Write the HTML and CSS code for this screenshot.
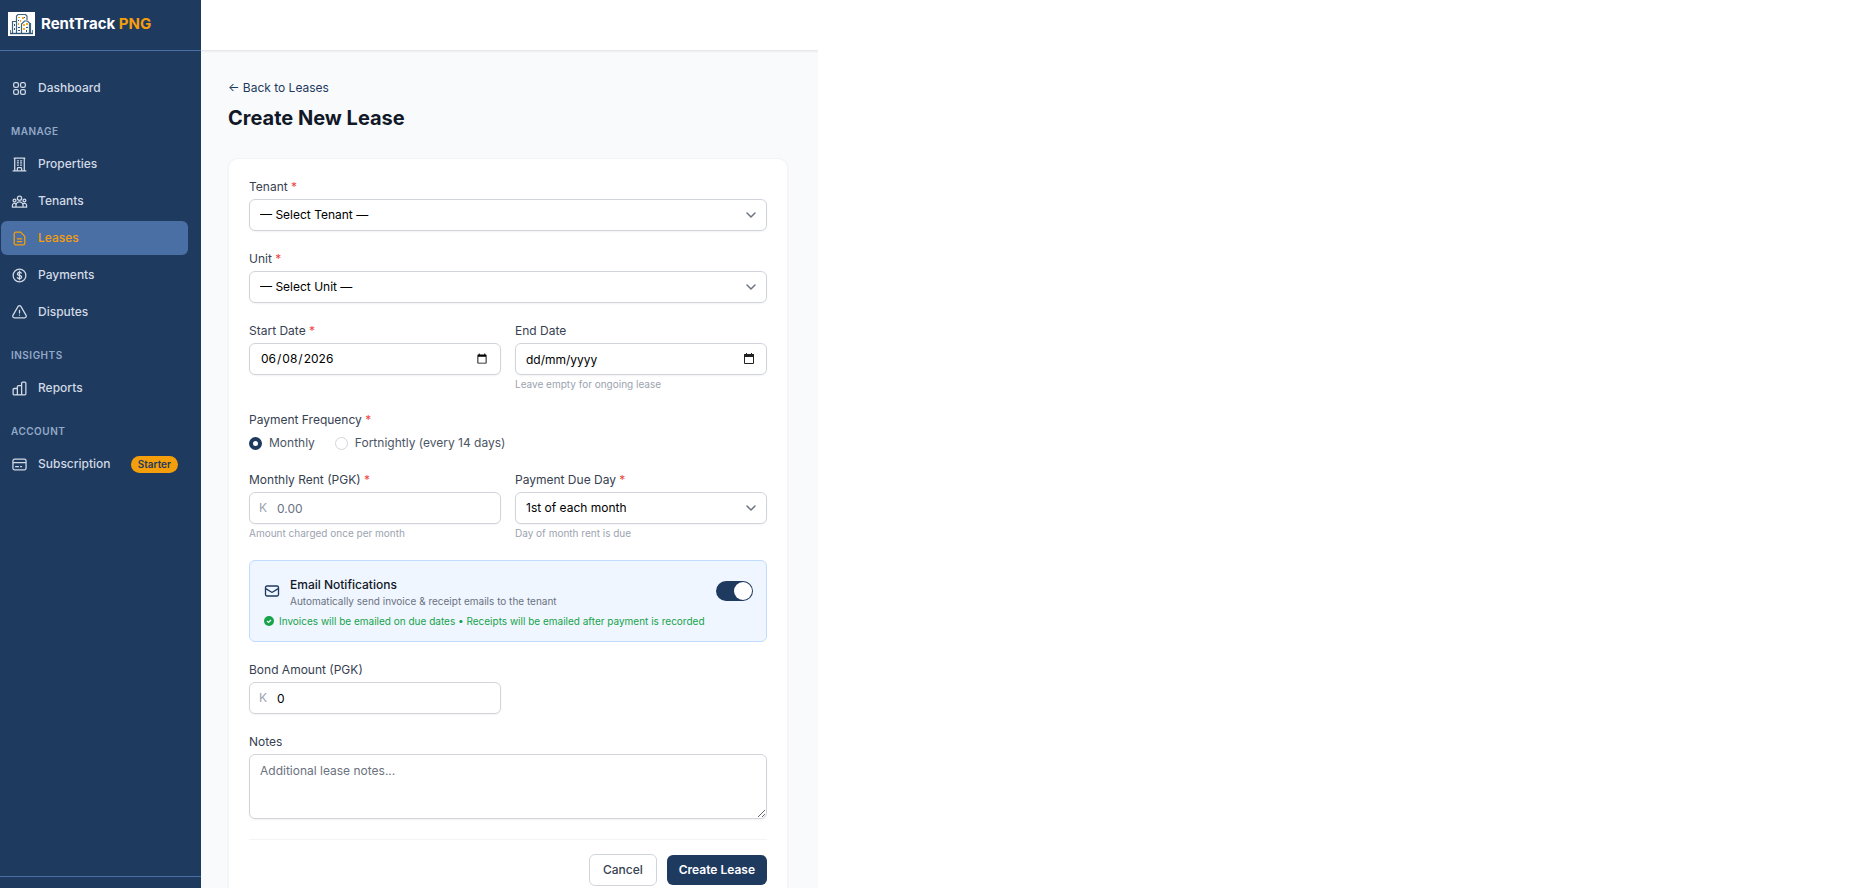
FILE: index.html
```html
<!DOCTYPE html>
<html lang="en">
<head>
<meta charset="utf-8">
<title>Create New Lease - RentTrack PNG</title>
<link rel="stylesheet" href="styles.css">
</head>
<body>
<div class="app">
  <aside class="sidebar">
    <a class="brand" href="#">
      <svg class="brand-logo" viewBox="0 0 27 24" aria-hidden="true">
        <rect width="27" height="24" fill="#fff"/>
        <path d="M4.500 21V9.500h4M8.500 21V4l1.500-1.500h7.500l1.500 1.500v4M13.500 21v-9l3-3h3l2 2V21M21.500 11.500h1V21" fill="none" stroke="#3f6482" stroke-width="1.2"/>
        <path d="M2 21.500h23" stroke="#2f5573" stroke-width="1.4"/>
        <path d="M2.500 21V18M24.500 21v-3" stroke="#5b7d98"/>
        <g fill="#f5a623"><rect x="10" y="5" width="2" height="1"/><rect x="14" y="5" width="2" height="2"/><rect x="12" y="8" width="1" height="2"/><rect x="10" y="11" width="1" height="2"/><rect x="15" y="12" width="2" height="2"/><rect x="18" y="11" width="2" height="2"/><rect x="15" y="16" width="2" height="2"/></g>
        <g fill="#2f5573"><rect x="10" y="8" width="1" height="1"/><rect x="16" y="5" width="1" height="1"/><rect x="6" y="12" width="1" height="2"/><rect x="6" y="16" width="1" height="2"/><rect x="10" y="15" width="2" height="1"/><rect x="10" y="18" width="2" height="1"/><rect x="18" y="15" width="2" height="1"/><rect x="18" y="18" width="1" height="2"/></g>
      </svg>
      <span class="brand-name">RentTrack <span class="brand-accent">PNG</span></span>
    </a>
    <nav class="nav">
      <a class="nav-item" href="#"><svg class="icon" viewBox="0 0 24 24"><path d="M3.750 6A2.250 2.250 0 0 1 6 3.750h2.250A2.250 2.250 0 0 1 10.500 6v2.250a2.250 2.250 0 0 1-2.250 2.250H6a2.250 2.250 0 0 1-2.250-2.250V6ZM3.750 15.750A2.250 2.250 0 0 1 6 13.500h2.250a2.250 2.250 0 0 1 2.250 2.250V18a2.250 2.250 0 0 1-2.250 2.250H6A2.250 2.250 0 0 1 3.750 18v-2.250ZM13.500 6a2.250 2.250 0 0 1 2.250-2.250H18A2.250 2.250 0 0 1 20.250 6v2.250A2.250 2.250 0 0 1 18 10.500h-2.250a2.250 2.250 0 0 1-2.250-2.250V6ZM13.500 15.750a2.250 2.250 0 0 1 2.250-2.250H18a2.250 2.250 0 0 1 2.250 2.250V18A2.250 2.250 0 0 1 18 20.250h-2.250A2.250 2.250 0 0 1 13.500 18v-2.250Z"/></svg>Dashboard</a>
      <h2 class="nav-heading">Manage</h2>
      <a class="nav-item" href="#"><svg class="icon" viewBox="0 0 24 24"><path d="M3 21h18M4.500 3h15M5.250 3v18m13.500-18v18M9 6.750h1.500m-1.500 3h1.500m-1.500 3h1.500m3-6H15m-1.500 3H15m-1.500 3H15M9 21v-3.375c0-.621.504-1.125 1.125-1.125h3.750c.621 0 1.125.504 1.125 1.125V21"/></svg>Properties</a>
      <a class="nav-item" href="#"><svg class="icon" viewBox="0 0 24 24"><path d="M15 7.500a3 3 0 1 1-6 0 3 3 0 0 1 6 0ZM7 10.500a2 2 0 1 1-4 0 2 2 0 0 1 4 0ZM21 10.500a2 2 0 1 1-4 0 2 2 0 0 1 4 0ZM7 20v-2.500a5 5 0 0 1 10 0V20ZM7 20H2v-2a3 3 0 0 1 5.500-2M17 20h5v-2a3 3 0 0 0-5.500-2"/></svg>Tenants</a>
      <a class="nav-item active" href="#" aria-current="page"><svg class="icon" viewBox="0 0 24 24"><path d="M19.500 9 13.500 3H6.750A2.250 2.250 0 0 0 4.500 5.250v13.500A2.250 2.250 0 0 0 6.750 21h10.500a2.250 2.250 0 0 0 2.250-2.250V9ZM9 12.500h6M9 16.500h6"/></svg>Leases</a>
      <a class="nav-item" href="#"><svg class="icon" viewBox="0 0 24 24"><path d="M12 6v12m-3-2.818.879.659c1.171.879 3.070.879 4.242 0 1.172-.879 1.172-2.303 0-3.182C13.536 12.219 12.768 12 12 12c-.725 0-1.450-.220-2.003-.659-1.106-.879-1.106-2.303 0-3.182s2.900-.879 4.006 0l.415.330M21 12a9 9 0 1 1-18 0 9 9 0 0 1 18 0Z"/></svg>Payments</a>
      <a class="nav-item" href="#"><svg class="icon" viewBox="0 0 24 24"><path d="M12 9v3.750m-9.303 3.376c-.866 1.500.217 3.374 1.948 3.374h14.710c1.730 0 2.813-1.874 1.948-3.374L13.949 3.378c-.866-1.500-3.032-1.500-3.898 0L2.697 16.126ZM12 15.750h.007v.008H12v-.008Z"/></svg>Disputes</a>
      <h2 class="nav-heading">Insights</h2>
      <a class="nav-item" href="#"><svg class="icon" viewBox="0 0 24 24"><path d="M9 21H4.500A1.500 1.500 0 0 1 3 19.500v-6A1.500 1.500 0 0 1 4.500 12H9M9 19.500v-10A1.500 1.500 0 0 1 10.500 8H15M15 19.500v-15A1.500 1.500 0 0 1 16.500 3h3A1.500 1.500 0 0 1 21 4.500v15a1.500 1.500 0 0 1-1.500 1.500h-3a1.500 1.500 0 0 1-1.500-1.500 1.500 1.500 0 0 1-1.500 1.500h-3A1.500 1.500 0 0 1 9 19.500 1.500 1.500 0 0 1 7.500 21"/></svg>Reports</a>
      <h2 class="nav-heading">Account</h2>
      <a class="nav-item" href="#"><svg class="icon" viewBox="0 0 24 24"><path d="M3 9.500h18M6.500 15h4m3 0h1.500M5 19.500h14a2.250 2.250 0 0 0 2.250-2.250V6.750A2.250 2.250 0 0 0 19 4.500H5a2.250 2.250 0 0 0-2.250 2.250v10.500A2.250 2.250 0 0 0 5 19.500Z"/></svg>Subscription<span class="plan">Starter</span></a>
    </nav>
    <div class="sidebar-footer"></div>
  </aside>
  <div class="page">
    <header class="topbar"></header>
    <main class="content">
      <a class="back" href="#">← Back to Leases</a>
      <h1 class="title">Create New Lease</h1>
      <form class="card">
        <div class="field">
          <label for="tenant">Tenant <span class="req">*</span></label>
          <div class="select-wrap">
            <select id="tenant" class="control"><option>— Select Tenant —</option></select>
            <svg class="chevron" viewBox="0 0 20 20"><path d="M6 8l4 4 4-4"/></svg>
          </div>
        </div>
        <div class="field">
          <label for="unit">Unit <span class="req">*</span></label>
          <div class="select-wrap">
            <select id="unit" class="control"><option>— Select Unit —</option></select>
            <svg class="chevron" viewBox="0 0 20 20"><path d="M6 8l4 4 4-4"/></svg>
          </div>
        </div>
        <div class="row">
          <div class="field">
            <label for="start">Start Date <span class="req">*</span></label>
            <input id="start" class="control" type="date" value="2026-06-08">
          </div>
          <div class="field">
            <label for="end">End Date</label>
            <div class="date-wrap">
              <input id="end" class="control date-text" type="text" placeholder="dd/mm/yyyy">
              <svg class="calendar" viewBox="0 0 12 12"><path d="M1.500 2.500h9v8h-9z" fill="none" stroke="currentColor"/><path d="M1 1h10v3H1zM3 0h1v2H3zM8 0h1v2H8z" fill="currentColor"/></svg>
            </div>
            <p class="hint">Leave empty for ongoing lease</p>
          </div>
        </div>
        <fieldset class="frequency">
          <legend>Payment Frequency <span class="req">*</span></legend>
          <div class="radios">
            <label class="radio"><input type="radio" name="frequency" checked>Monthly</label>
            <label class="radio"><input type="radio" name="frequency">Fortnightly (every 14 days)</label>
          </div>
        </fieldset>
        <div class="row">
          <div class="field">
            <label for="rent">Monthly Rent (PGK) <span class="req">*</span></label>
            <div class="money">
              <span class="currency">K</span>
              <input id="rent" class="control" type="text" placeholder="0.00">
            </div>
            <p class="hint">Amount charged once per month</p>
          </div>
          <div class="field">
            <label for="due">Payment Due Day <span class="req">*</span></label>
            <div class="select-wrap">
              <select id="due" class="control"><option>1st of each month</option></select>
              <svg class="chevron" viewBox="0 0 20 20"><path d="M6 8l4 4 4-4"/></svg>
            </div>
            <p class="hint">Day of month rent is due</p>
          </div>
        </div>
        <section class="notice">
          <div class="notice-main">
            <svg class="mail" viewBox="0 0 24 24"><path d="M21.750 6.750v10.500a2.250 2.250 0 0 1-2.250 2.250h-15a2.250 2.250 0 0 1-2.250-2.250V6.750m19.500 0A2.250 2.250 0 0 0 19.500 4.500h-15a2.250 2.250 0 0 0-2.250 2.250m19.500 0v.243a2.250 2.250 0 0 1-1.070 1.916l-7.500 4.615a2.250 2.250 0 0 1-2.360 0L3.320 8.910a2.250 2.250 0 0 1-1.070-1.916V6.750"/></svg>
            <div class="notice-text">
              <label class="notice-title" for="notify">Email Notifications</label>
              <p class="notice-sub">Automatically send invoice &amp; receipt emails to the tenant</p>
            </div>
            <input id="notify" class="toggle" type="checkbox" role="switch" checked>
          </div>
          <p class="notice-status"><svg class="tick" viewBox="0 0 10 10"><circle cx="5" cy="5" r="5" fill="#16a34a"/><path d="M3 5l1.500 1.500L7 4" fill="none" stroke="#fff" stroke-width="1.200"/></svg>Invoices will be emailed on due dates • Receipts will be emailed after payment is recorded</p>
        </section>
        <div class="row">
          <div class="field">
            <label for="bond">Bond Amount (PGK)</label>
            <div class="money">
              <span class="currency">K</span>
              <input id="bond" class="control" type="text" value="0">
            </div>
          </div>
        </div>
        <div class="field">
          <label for="notes">Notes</label>
          <textarea id="notes" class="control notes" placeholder="Additional lease notes..."></textarea>
        </div>
        <div class="actions">
          <button class="btn" type="button">Cancel</button>
          <button class="btn btn-primary" type="submit">Create Lease</button>
        </div>
      </form>
    </main>
  </div>
</div>
</body>
</html>
```

FILE: styles.css
```css
*, *::before, *::after { box-sizing: border-box; }
body { margin: 0; background: #fff; color: #111827; font: 12px/16px Inter, "Liberation Sans", sans-serif; }
h1, h2, p, fieldset { margin: 0; padding: 0; border: 0; }
a { color: inherit; text-decoration: none; }
input, select, textarea, button { font: inherit; color: inherit; margin: 0; }

.app { display: flex; max-width: 818px; height: 100vh; overflow: hidden; }

.sidebar { display: flex; flex-direction: column; flex: 0 0 201px; background: #1e3a5f; color: #d1d9e4; }
.brand { display: flex; align-items: center; gap: 6px; height: 51px; padding: 0 8px 3px; border-bottom: 1px solid #4a6fa5; }
.brand-logo { width: 27px; height: 24px; }
.brand-name { font-size: 15px; line-height: 20px; font-weight: 700; color: #fff; }
.brand-accent { color: #f59e0b; }
.nav { flex: 1; display: flex; flex-direction: column; gap: 3px; padding: 20px 13px 0 1px; }
.nav-item { display: flex; align-items: center; gap: 10px; height: 34px; padding: 0 10px; border-radius: 6px; font-weight: 500; }
.nav-item.active { background: #4a6fa5; color: #f59e0b; }
.nav-heading { margin: 15px 0 5px; padding: 0 10px; font-size: 10px; line-height: 16px; font-weight: 600; letter-spacing: 0.5px; text-transform: uppercase; color: #93a9c7; }
.icon { flex: none; width: 17px; height: 17px; fill: none; stroke: currentColor; stroke-width: 1.8; stroke-linecap: round; stroke-linejoin: round; }
.plan { margin-left: auto; padding: 0 7px; border-radius: 9px; background: #f59e0b; color: #1e3a5f; font-size: 10px; line-height: 17px; font-weight: 600; }
.sidebar-footer { height: 12px; border-top: 1px solid #4a6fa5; }

.page { flex: 1; min-width: 0; display: flex; flex-direction: column; background: #f9fafc; }
.topbar { flex: 0 0 51px; background: #fff; border-bottom: 1px solid #e5e7eb; box-shadow: 0 1px 2px rgba(0, 0, 0, 0.05); }
.content { flex: 1; min-height: 0; padding: 29px 30px 0 27px; }
.back { display: block; color: #1e3a5f; }
.title { margin-top: 8px; font-size: 20px; line-height: 28px; font-weight: 700; }

.card { display: flex; flex-direction: column; margin-top: 26px; padding: 20px; background: #fff; border: 1px solid #f3f4f6; border-radius: 10px; box-shadow: 0 1px 2px rgba(0, 0, 0, 0.05); }
.field { display: flex; flex-direction: column; padding-bottom: 20px; }
.field > label, legend { margin-bottom: 4px; padding: 0; color: #374151; }
.req { color: #ef4444; }
.row { display: grid; grid-template-columns: 1fr 1fr; gap: 14px; }
.control { display: block; width: 100%; height: 32px; padding: 0 10px; background: #fff; border: 1px solid #d1d5db; border-radius: 6px; box-shadow: 0 1px 2px rgba(0, 0, 0, 0.05); color: #000; appearance: none; }
.control::placeholder { color: #6b7280; }
.date-text::placeholder { color: #000; }
.select-wrap, .date-wrap, .money { position: relative; }
.chevron { position: absolute; right: 6px; top: 6px; width: 20px; height: 20px; fill: none; stroke: #6b7280; stroke-width: 1.5; stroke-linecap: round; stroke-linejoin: round; pointer-events: none; }
.calendar { position: absolute; right: 12px; top: 10px; width: 12px; height: 12px; color: #222; }
.currency { position: absolute; left: 10px; top: 8px; color: #9ca3af; }
.money .control { padding-left: 27px; }
.hint { margin-top: 2px; font-size: 10px; line-height: 14px; color: #9ca3af; }

.frequency { margin-top: 1px; padding-bottom: 21px; }
.frequency legend { margin-bottom: 7px; }
.radios { display: flex; gap: 20px; }
.radio { display: flex; align-items: center; gap: 7px; color: #4b5563; }
.radio input { width: 13px; height: 13px; border: 1px solid #d1d5db; border-radius: 50%; background: #fff; appearance: none; }
.radio input:checked { border: 4px solid #1e3a5f; }

.notice { margin-bottom: 20px; padding: 16px 13px 13px 14px; background: #eff6ff; border: 1px solid #bfdbfe; border-radius: 6px; }
.notice-main { display: flex; align-items: flex-start; gap: 10px; }
.mail { flex: none; width: 16px; height: 16px; margin-top: 6px; fill: none; stroke: #1e3a5f; stroke-width: 2; stroke-linecap: round; stroke-linejoin: round; }
.notice-text { flex: 1; }
.notice-title { display: block; font-weight: 500; }
.notice-sub { font-size: 10px; line-height: 16px; color: #6b7280; }
.toggle { width: 37px; height: 20px; margin-top: 4px; padding: 1px; border-radius: 10px; background: #1e3a5f; appearance: none; }
.toggle::before { content: ""; display: block; width: 18px; height: 18px; border-radius: 50%; background: #fff; }
.toggle:checked::before { margin-left: auto; }
.notice-status { display: flex; align-items: center; gap: 5px; margin-top: 5px; font-size: 10px; line-height: 14px; color: #16a34a; }
.tick { width: 10px; height: 10px; }

.notes { height: 65px; padding: 8px 10px; resize: vertical; }
.actions { display: flex; justify-content: flex-end; align-items: center; gap: 10px; padding-top: 14px; border-top: 1px solid #f3f4f6; }
.btn { height: 32px; padding: 0 13px; background: #fff; border: 1px solid #d1d5db; border-radius: 6px; font-weight: 500; color: #374151; }
.btn-primary { height: 30px; padding: 0 12px; background: #1e3a5f; border: 0; color: #fff; font-weight: 600; }
```
